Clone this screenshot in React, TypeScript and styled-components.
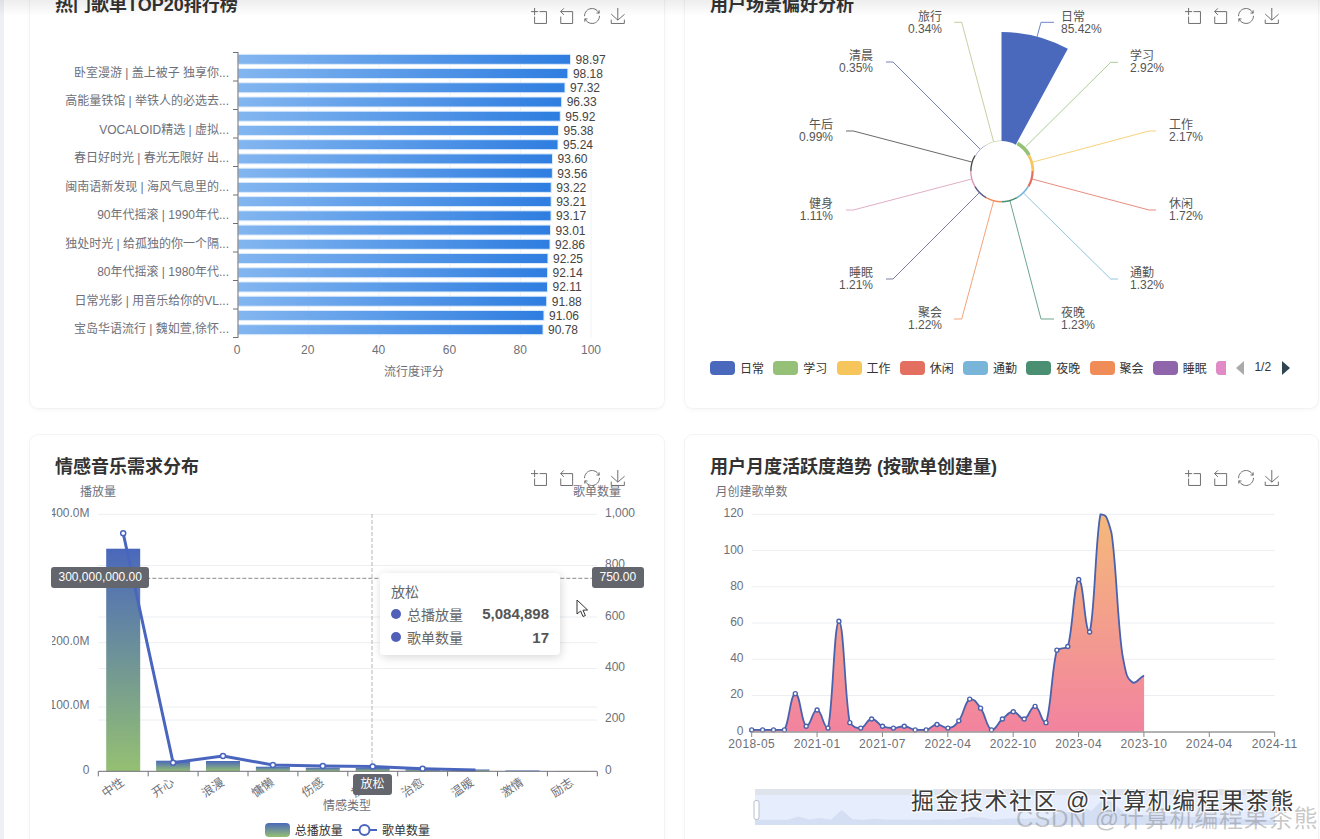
import styled, { createGlobalStyle } from 'styled-components';

const FONT = '"Liberation Sans", "Noto Sans CJK SC", sans-serif';

const GlobalStyle = createGlobalStyle`
  html, body {
    margin: 0;
    background: #fff;
    font-family: ${FONT};
  }
`;

const Page = styled.div`
  position: relative;
  display: flex;
  width: 1320px;
  height: 839px;
  overflow: hidden;
  background: #fff;
`;

const Sidebar = styled.div`
  flex: 0 0 4px;
  background: #eef0f4;
`;

const TopShade = styled.div`
  position: absolute;
  top: 0;
  left: 0;
  right: 0;
  height: 16px;
  background: linear-gradient(rgba(0, 0, 0, 0.07), rgba(0, 0, 0, 0));
  pointer-events: none;
`;

const Board = styled.div`
  display: grid;
  grid-template-columns: 634px 633px;
  grid-auto-rows: 435px;
  gap: 27px 21px;
  margin-top: -27px;
  padding-left: 26px;
`;

const Card = styled.section`
  position: relative;
  border-radius: 8px;
  background: #fff;
  box-shadow: 0 0 0 1px #f2f3f5, 0 2px 5px rgba(0, 0, 0, 0.04);
`;

const CardHeader = styled.header`
  position: absolute;
  top: 20px;
  left: 25px;
  right: 38px;
  display: flex;
  justify-content: space-between;
`;

const Title = styled.h3`
  margin: 0;
  font-size: 18px;
  line-height: 24px;
  font-weight: 700;
  color: #333;
`;

const Toolbox = styled.div`
  display: flex;
  gap: 10.2px;
  padding-top: 15px;
`;

const ToolIcon = styled.svg`
  display: block;
  width: 16px;
  height: 16px;
  fill: none;
  stroke: #6a6a6a;
  stroke-width: 3.6;
`;

const Canvas = styled.svg`
  display: block;
  font-family: ${FONT};
  font-size: 12px;
`;

const AxisLabel = styled.text`
  fill: #6e7079;
`;

const DarkLabel = styled.text`
  fill: #444;
`;

const PieLabel = styled.text`
  fill: #555;
`;

const Legend = styled.div<{ $center?: boolean }>`
  display: flex;
  align-items: center;
  height: 14px;
  padding-left: ${(p) => (p.$center ? '10px' : '25px')};
  justify-content: ${(p) => (p.$center ? 'center' : 'flex-start')};
  font-size: 12px;
  color: #333;
`;

const LegendItem = styled.div`
  display: flex;
  align-items: center;
  gap: 5px;
  margin-right: 9.25px;
  white-space: nowrap;
`;

const LegendText = styled.span`
  margin-bottom: 2px;
`;

const Swatch = styled.span<{ $color: string; $width?: number }>`
  display: block;
  width: ${(p) => p.$width ?? 25}px;
  height: 14px;
  border-radius: ${(p) => (p.$width ? '4px 0 0 4px' : '4px')};
  background: ${(p) => p.$color};
`;

const Pager = styled.div`
  display: flex;
  align-items: center;
  gap: 10px;
  margin-left: 1px;
  color: #333;
`;

const PagerArrow = styled.span<{ $dir: 'left' | 'right' }>`
  width: 0;
  height: 0;
  border-top: 7px solid transparent;
  border-bottom: 7px solid transparent;
  ${(p) =>
    p.$dir === 'left'
      ? 'border-right: 8px solid #aaa;'
      : 'border-left: 8px solid #2f4554; margin-left: 1px;'}
`;

const PointerTag = styled.div<{ $left: number; $top: number }>`
  position: absolute;
  left: ${(p) => p.$left}px;
  top: ${(p) => p.$top}px;
  padding: 0 7.5px;
  height: 21px;
  line-height: 21px;
  border-radius: 3px;
  background: #63666c;
  color: #fff;
  font-size: 12px;
  white-space: nowrap;
`;

const Tooltip = styled.div`
  position: absolute;
  left: 350px;
  top: 138px;
  box-sizing: border-box;
  width: 180px;
  height: 82px;
  padding: 9px 11px;
  border-radius: 4px;
  background: #fff;
  box-shadow: 1px 2px 10px rgba(0, 0, 0, 0.16);
  font-size: 14px;
  color: #666;
`;

const TooltipTitle = styled.div`
  line-height: 20px;
`;

const TooltipRow = styled.div`
  display: flex;
  align-items: center;
  height: 23.5px;
`;

const TooltipDot = styled.span`
  width: 10px;
  height: 10px;
  margin-right: 6px;
  border-radius: 50%;
  background: #5060b8;
`;

const TooltipValue = styled.b`
  margin-left: auto;
  font-size: 15px;
  color: #555;
`;

const Cursor = styled.svg`
  position: absolute;
  left: 546px;
  top: 164px;
  width: 15px;
  height: 20px;
`;

const WatermarkMain = styled.div`
  position: absolute;
  left: 911px;
  top: 787px;
  font-size: 23px;
  line-height: 29px;
  letter-spacing: 1.5px;
  color: #3c3c3c;
  text-shadow: 1px 1px 0 #fff, -1px -1px 0 #fff, 1px -1px 0 #fff, -1px 1px 0 #fff;
  white-space: nowrap;
`;

const WatermarkSub = styled.div`
  position: absolute;
  left: 1016px;
  top: 804px;
  font-size: 24px;
  line-height: 30px;
  letter-spacing: 0.8px;
  color: rgba(110, 110, 110, 0.38);
  white-space: nowrap;
`;

const TOOL_PATHS = [
  'M0,13.5h26.9 M13.5,26.9V0 M32.1,13.5H58V58H13.5V32.1',
  'M22,1.4L9.9,13.5l12.3,12.3 M10.3,13.5H54.9v44.6H10.3v-26',
  'M47,18.9h9.8V8.7 M56.3,20.1C52.1,9,40.5,0.6,26.8,2.1C12.6,3.7,1.6,16.2,2.1,30.6 M13,41.1H3.1v10.2 M3.7,39.9c4.2,11.1,15.8,19.5,29.5,18c14.2-1.6,25.2-14.1,24.7-28.5',
  'M4.7,22.9L29.3,45.5L54.7,23.4M4.6,43.6L4.6,58L53.8,58L53.8,43.6M29.2,45.1L29.2,0',
];

const ChartHeader = ({ title }: { title: string }) => (
  <CardHeader>
    <Title>{title}</Title>
    <Toolbox>
      {TOOL_PATHS.map((d) => (
        <ToolIcon key={d} viewBox="0 0 60 60">
          <path d={d} />
        </ToolIcon>
      ))}
    </Toolbox>
  </CardHeader>
);

/* ---------- 热门歌单 ---------- */

const TOP_VALUES = [
  98.97, 98.18, 97.32, 96.33, 95.92, 95.38, 95.24, 93.6, 93.56, 93.22, 93.21, 93.17, 93.01, 92.86,
  92.25, 92.14, 92.11, 91.88, 91.06, 90.78,
];

const TOP_NAMES = [
  '卧室漫游 | 盖上被子 独享你...',
  '高能量铁馆 | 举铁人的必选去...',
  'VOCALOID精选 | 虚拟...',
  '春日好时光 | 春光无限好 出...',
  '闽南语新发现 | 海风气息里的...',
  '90年代摇滚 | 1990年代...',
  '独处时光 | 给孤独的你一个隔...',
  '80年代摇滚 | 1980年代...',
  '日常光影 | 用音乐给你的VL...',
  '宝岛华语流行 | 魏如萱,徐怀...',
];

const TopChart = () => (
  <Canvas width={634} height={435} viewBox="30 -27 634 435">
    <defs>
      <linearGradient id="topBar" x1="0" x2="1" y1="0" y2="0">
        <stop offset="0" stopColor="#83b6f0" />
        <stop offset="1" stopColor="#2e7de0" />
      </linearGradient>
    </defs>
    {[0, 20, 40, 60, 80, 100].map((v) => {
      const x = 238 + v * 3.53;
      return (
        <g key={v}>
          {v > 0 && <line x1={x} x2={x} y1={52} y2={338} stroke="#f1f2f4" />}
          <AxisLabel x={237 + v * 3.54} y={354} textAnchor="middle">
            {v}
          </AxisLabel>
        </g>
      );
    })}
    {TOP_VALUES.map((v, i) => {
      const y = 54.3 + i * 14.23;
      const w = v * 3.36;
      return (
        <g key={v}>
          <rect x={238} y={y} width={w} height={10} fill="url(#topBar)" stroke="#dcebfb" strokeWidth={1} />
          <DarkLabel x={238 + w + 5} y={y + 9.5}>
            {v.toFixed(2)}
          </DarkLabel>
        </g>
      );
    })}
    <line x1={238} x2={238} y1={52} y2={338} stroke="#6e7079" />
    {Array.from({ length: 11 }, (_, i) => {
      const y = 52.5 + i * 28.5;
      return <line key={i} x1={233} x2={238} y1={y} y2={y} stroke="#6e7079" />;
    })}
    {TOP_NAMES.map((name, i) => (
      <AxisLabel key={name} x={229} y={77 + i * 28.46} textAnchor="end">
        {name}
      </AxisLabel>
    ))}
    <AxisLabel x={414} y={376} textAnchor="middle">
      流行度评分
    </AxisLabel>
  </Canvas>
);

/* ---------- 用户场景 ---------- */

type Scene = {
  name: string;
  value: number;
  color: string;
  from: [number, number];
  elbow: [number, number];
  endX: number;
  textX: number;
  textY: number;
};

const SCENES: Scene[] = [
  { name: '日常', value: 85.42, color: '#4a69bd', from: [1037, 37], elbow: [1041, 22.3], endX: 1054, textX: 1061, textY: 21 },
  { name: '学习', value: 2.92, color: '#95c078', from: [1025.6, 146.7], elbow: [1110.7, 62.3], endX: 1118, textX: 1130, textY: 60 },
  { name: '工作', value: 2.17, color: '#f6c55c', from: [1033, 162], elbow: [1149, 131], endX: 1156, textX: 1169, textY: 129 },
  { name: '休闲', value: 1.72, color: '#e36f60', from: [1032, 179], elbow: [1149, 210], endX: 1156, textX: 1169, textY: 208 },
  { name: '通勤', value: 1.32, color: '#78b5d8', from: [1023.5, 193], elbow: [1110.7, 279], endX: 1118, textX: 1130, textY: 277 },
  { name: '夜晚', value: 1.23, color: '#4a8f72', from: [1010, 201], elbow: [1041, 319], endX: 1054, textX: 1061, textY: 317 },
  { name: '聚会', value: 1.22, color: '#f08c58', from: [993.6, 201], elbow: [961.7, 319], endX: 954, textX: 942, textY: 317 },
  { name: '睡眠', value: 1.21, color: '#5b5f8a', from: [979, 193], elbow: [893, 279], endX: 886, textX: 873, textY: 277 },
  { name: '健身', value: 1.11, color: '#d79ab8', from: [971.7, 179], elbow: [853.4, 210], endX: 846, textX: 833, textY: 208 },
  { name: '午后', value: 0.99, color: '#444', from: [971.7, 162], elbow: [853.4, 131], endX: 846, textX: 833, textY: 129 },
  { name: '清晨', value: 0.35, color: '#5561a8', from: [980, 149], elbow: [893, 62], endX: 886, textX: 873, textY: 60 },
  { name: '旅行', value: 0.34, color: '#b5c48c', from: [993.6, 141.7], elbow: [961.7, 22.3], endX: 954, textX: 942, textY: 21 },
];

const SCENE_LEGEND: [string, string][] = [
  ['日常', '#4a69bd'],
  ['学习', '#95c078'],
  ['工作', '#f6c55c'],
  ['休闲', '#e36f60'],
  ['通勤', '#78b5d8'],
  ['夜晚', '#4a8f72'],
  ['聚会', '#f08c58'],
  ['睡眠', '#8f64ab'],
];

const sectorPath = (cx: number, cy: number, r0: number, r1: number, a0: number, a1: number) => {
  const pt = (r: number, a: number) => {
    const rad = (a * Math.PI) / 180;
    return `${cx + r * Math.sin(rad)},${cy - r * Math.cos(rad)}`;
  };
  return `M${pt(r0, a0)} L${pt(r1, a0)} A${r1},${r1} 0 0 1 ${pt(r1, a1)} L${pt(r0, a1)} A${r0},${r0} 0 0 0 ${pt(r0, a0)} Z`;
};

const SceneChart = () => (
  <Canvas width={633} height={388} viewBox="685 -27 633 388">
    {SCENES.map((s, i) => {
      const end = s.textX > 1002;
      return (
        <g key={s.name}>
          <path
            d={sectorPath(1001.5, 171, 30, 30 + s.value * 1.276, i * 30, (i + 1) * 30 - (i === 0 ? 1.5 : 0))}
            fill={s.color}
          />
          <polyline
            points={`${s.from[0]},${s.from[1]} ${s.elbow[0]},${s.elbow[1]} ${s.endX},${s.elbow[1]}`}
            fill="none"
            stroke={s.color}
            strokeOpacity={0.8}
            strokeWidth={1}
          />
          <PieLabel x={s.textX} y={s.textY} textAnchor={end ? 'start' : 'end'}>
            {s.name}
          </PieLabel>
          <PieLabel x={s.textX} y={s.textY + 11.5} textAnchor={end ? 'start' : 'end'}>
            {s.value.toFixed(2)}%
          </PieLabel>
        </g>
      );
    })}
  </Canvas>
);

/* ---------- 情感音乐 ---------- */

const MOODS = ['中性', '开心', '浪漫', '慵懒', '伤感', '放松', '治愈', '温暖', '激情', '励志'];
const MOOD_BAR_TOP = [548.7, 760.7, 761, 766.7, 767.7, 768, 769.3, 769.5, 770.5, 771];
const MOOD_LINE_Y = [533.3, 762.7, 756, 765, 766, 766.5, 768.7, 770];
const BASE_Y = 771.3;
const moodX = (i: number) => 123.2 + i * 49.9;

const MoodChart = () => (
  <Canvas width={634} height={388} viewBox="30 435 634 388">
    <defs>
      <linearGradient id="moodBar" x1="0" x2="0" y1="0" y2="1">
        <stop offset="0" stopColor="#4a68bb" />
        <stop offset="1" stopColor="#95c072" />
      </linearGradient>
      <clipPath id="leftLabels">
        <rect x={52} y={500} width={60} height={280} />
      </clipPath>
    </defs>
    {[514.3, 565.5, 617, 642.7, 668.5, 707, 720].map((y) => (
      <line key={y} x1={98.3} x2={597} y1={y} y2={y} stroke="#eceef1" />
    ))}
    <line x1={98.3} x2={597} y1={578.3} y2={578.3} stroke="#8a8a8a" strokeDasharray="4 2" />
    <line x1={372} x2={372} y1={514} y2={771} stroke="#b5b5b5" strokeDasharray="4 2" />
    {MOOD_BAR_TOP.map((top, i) => (
      <rect key={MOODS[i]} x={moodX(i) - 17} y={top} width={34} height={Math.max(BASE_Y - top, 0.4)} fill="url(#moodBar)" />
    ))}
    <polyline
      points={MOOD_LINE_Y.map((y, i) => `${moodX(i) + (i === 7 ? 3 : 0)},${y}`).join(' ')}
      fill="none"
      stroke="#4a65bd"
      strokeWidth={3}
      strokeLinejoin="round"
    />
    {MOOD_LINE_Y.slice(0, 7).map((y, i) => (
      <circle key={i} cx={moodX(i)} cy={y} r={2.5} fill="#fff" stroke="#4a65bd" strokeWidth={1.5} />
    ))}
    <line x1={98.3} x2={597} y1={BASE_Y} y2={BASE_Y} stroke="#6e7079" />
    {Array.from({ length: 11 }, (_, i) => {
      const x = 98.3 + i * 49.9;
      return <line key={i} x1={x} x2={x} y1={BASE_Y} y2={BASE_Y + 5} stroke="#6e7079" />;
    })}
    <g clipPath="url(#leftLabels)">
      {[
        ['400.0M', 517],
        ['200.0M', 645],
        ['100.0M', 709],
        ['0', 774],
      ].map(([text, y]) => (
        <AxisLabel key={text} x={89.5} y={y} textAnchor="end">
          {text}
        </AxisLabel>
      ))}
    </g>
    {[
      ['1,000', 517],
      ['800', 568],
      ['600', 620],
      ['400', 671],
      ['200', 722],
      ['0', 774],
    ].map(([text, y]) => (
      <AxisLabel key={text} x={605} y={y}>
        {text}
      </AxisLabel>
    ))}
    <AxisLabel x={98} y={496} textAnchor="middle">
      播放量
    </AxisLabel>
    <AxisLabel x={597} y={496} textAnchor="middle">
      歌单数量
    </AxisLabel>
    {MOODS.map((m, i) => (
      <AxisLabel key={m} textAnchor="end" transform={`translate(${moodX(i) + 2},784) rotate(-35)`}>
        {m}
      </AxisLabel>
    ))}
    <AxisLabel x={347} y={810} textAnchor="middle">
      情感类型
    </AxisLabel>
  </Canvas>
);

/* ---------- 月度趋势 ---------- */

const MONTHLY = [
  1, 1, 1, 1, 21, 3, 12, 2, 61, 5, 2, 7, 3, 2, 3, 1, 1, 4, 2, 6, 18, 13, 1, 7, 11, 7, 14, 5, 45, 47, 84, 55, 120, 110,
  43, 27, 31,
];
const MONTH_TICKS = ['2018-05', '2021-01', '2021-07', '2022-04', '2022-10', '2023-04', '2023-10', '2024-04', '2024-11'];
const monthX = (i: number) => 751.7 + i * 10.9;
const monthY = (v: number) => 731.7 - v * 1.8117;

const smoothPath = (pts: [number, number][]) => {
  let d = `M${pts[0][0]},${pts[0][1]}`;
  for (let i = 0; i < pts.length - 1; i++) {
    const p0 = pts[Math.max(i - 1, 0)];
    const p1 = pts[i];
    const p2 = pts[i + 1];
    const p3 = pts[Math.min(i + 2, pts.length - 1)];
    const lo = Math.min(p1[1], p2[1]);
    const hi = Math.max(p1[1], p2[1]);
    const clamp = (y: number) => Math.min(hi, Math.max(lo, y));
    const c1y = clamp(p1[1] + (p2[1] - p0[1]) * 0.22);
    const c2y = clamp(p2[1] - (p3[1] - p1[1]) * 0.22);
    d += ` C${p1[0] + 5},${c1y} ${p2[0] - 5},${c2y} ${p2[0]},${p2[1]}`;
  }
  return d;
};

const MONTH_PTS = MONTHLY.map((v, i) => [monthX(i), monthY(v)] as [number, number]);
const MONTH_LINE = smoothPath(MONTH_PTS);
const MONTH_AREA = `${MONTH_LINE} L${monthX(36)},731.7 L${monthX(0)},731.7 Z`;
const SHADOW_POINTS = [
  '755,825',
  ...MONTHLY.map((v, i) => `${755 + i * 10.85},${820 - v * 0.164}`),
  '1275,820',
  '1275,825',
].join(' ');

const MonthChart = () => (
  <Canvas width={633} height={435} viewBox="685 435 633 435">
    <defs>
      <linearGradient id="monthArea" gradientUnits="userSpaceOnUse" x1="0" x2="0" y1="514" y2="732">
        <stop offset="0" stopColor="#f5b97a" />
        <stop offset="1" stopColor="#f2839f" />
      </linearGradient>
    </defs>
    {[20, 40, 60, 80, 100, 120].map((v) => (
      <line key={v} x1={751.7} x2={1274.6} y1={monthY(v)} y2={monthY(v)} stroke="#eceef1" />
    ))}
    {[0, 20, 40, 60, 80, 100, 120].map((v) => (
      <AxisLabel key={v} x={743.5} y={monthY(v) + 3} textAnchor="end">
        {v}
      </AxisLabel>
    ))}
    <AxisLabel x={715.5} y={496}>
      月创建歌单数
    </AxisLabel>
    <path d={MONTH_AREA} fill="url(#monthArea)" />
    <path d={MONTH_LINE} fill="none" stroke="#4a62ad" strokeWidth={1.8} />
    {MONTH_PTS.slice(0, 32).map(([x, y]) => (
      <circle key={x} cx={x} cy={y} r={2} fill="#fff" stroke="#4a62ad" strokeWidth={1.4} />
    ))}
    <line x1={751.7} x2={1274.6} y1={732} y2={732} stroke="#999" strokeWidth={1.6} />
    {MONTH_TICKS.map((t, i) => {
      const x = 751.7 + i * 65.37;
      return (
        <g key={t}>
          <line x1={x} x2={x} y1={732} y2={737} stroke="#888" />
          <AxisLabel x={x} y={748} textAnchor="middle" letterSpacing={0.4}>
            {t}
          </AxisLabel>
        </g>
      );
    })}
    <rect x={755} y={789} width={520} height={6} fill="#dfe3ec" />
    <rect x={755} y={795} width={520} height={30} fill="#e6edfc" />
    <polygon points={SHADOW_POINTS} fill="#d5dff4" />
    <rect x={754} y={800.5} width={5} height={19} rx={2} fill="#fff" stroke="#b8bfcc" />
  </Canvas>
);

export default function App() {
  return (
    <>
      <GlobalStyle />
      <Page>
        <Sidebar />
        <Board>
          <Card>
            <TopChart />
            <ChartHeader title="热门歌单TOP20排行榜" />
          </Card>
          <Card>
            <SceneChart />
            <Legend>
              {SCENE_LEGEND.map(([name, color]) => (
                <LegendItem key={name}>
                  <Swatch $color={color} />
                  <LegendText>{name}</LegendText>
                </LegendItem>
              ))}
              <LegendItem>
                <Swatch $color="#e08bc5" $width={10} />
              </LegendItem>
              <Pager>
                <PagerArrow $dir="left" />
                <LegendText>1/2</LegendText>
                <PagerArrow $dir="right" />
              </Pager>
            </Legend>
            <ChartHeader title="用户场景偏好分析" />
          </Card>
          <Card>
            <MoodChart />
            <Legend $center>
              <LegendItem>
                <Swatch $color="linear-gradient(#4a68bb, #95c072)" />
                <LegendText>总播放量</LegendText>
              </LegendItem>
              <LegendItem>
                <svg width={25} height={14}>
                  <line x1={0} x2={25} y1={7} y2={7} stroke="#4a65bd" strokeWidth={2} />
                  <circle cx={12.5} cy={7} r={5} fill="#fff" stroke="#4a65bd" strokeWidth={2} />
                </svg>
                <LegendText>歌单数量</LegendText>
              </LegendItem>
            </Legend>
            <ChartHeader title="情感音乐需求分布" />
            <PointerTag $left={21} $top={132}>
              300,000,000.00
            </PointerTag>
            <PointerTag $left={562} $top={132}>
              750.00
            </PointerTag>
            <PointerTag $left={323} $top={339}>
              放松
            </PointerTag>
            <Tooltip>
              <TooltipTitle>放松</TooltipTitle>
              <TooltipRow>
                <TooltipDot />
                总播放量
                <TooltipValue>5,084,898</TooltipValue>
              </TooltipRow>
              <TooltipRow>
                <TooltipDot />
                歌单数量
                <TooltipValue>17</TooltipValue>
              </TooltipRow>
            </Tooltip>
            <Cursor viewBox="0 0 15 20">
              <path d="M1 1 L1 15 L4.6 12 L7 17.5 L9.4 16.5 L7 11.2 L11.6 11 Z" fill="#fff" stroke="#333" strokeWidth={1} />
            </Cursor>
          </Card>
          <Card>
            <MonthChart />
            <ChartHeader title="用户月度活跃度趋势 (按歌单创建量)" />
          </Card>
        </Board>
        <TopShade />
        <WatermarkSub>CSDN @计算机编程果茶熊</WatermarkSub>
        <WatermarkMain>掘金技术社区 @ 计算机编程果茶熊</WatermarkMain>
      </Page>
    </>
  );
}
